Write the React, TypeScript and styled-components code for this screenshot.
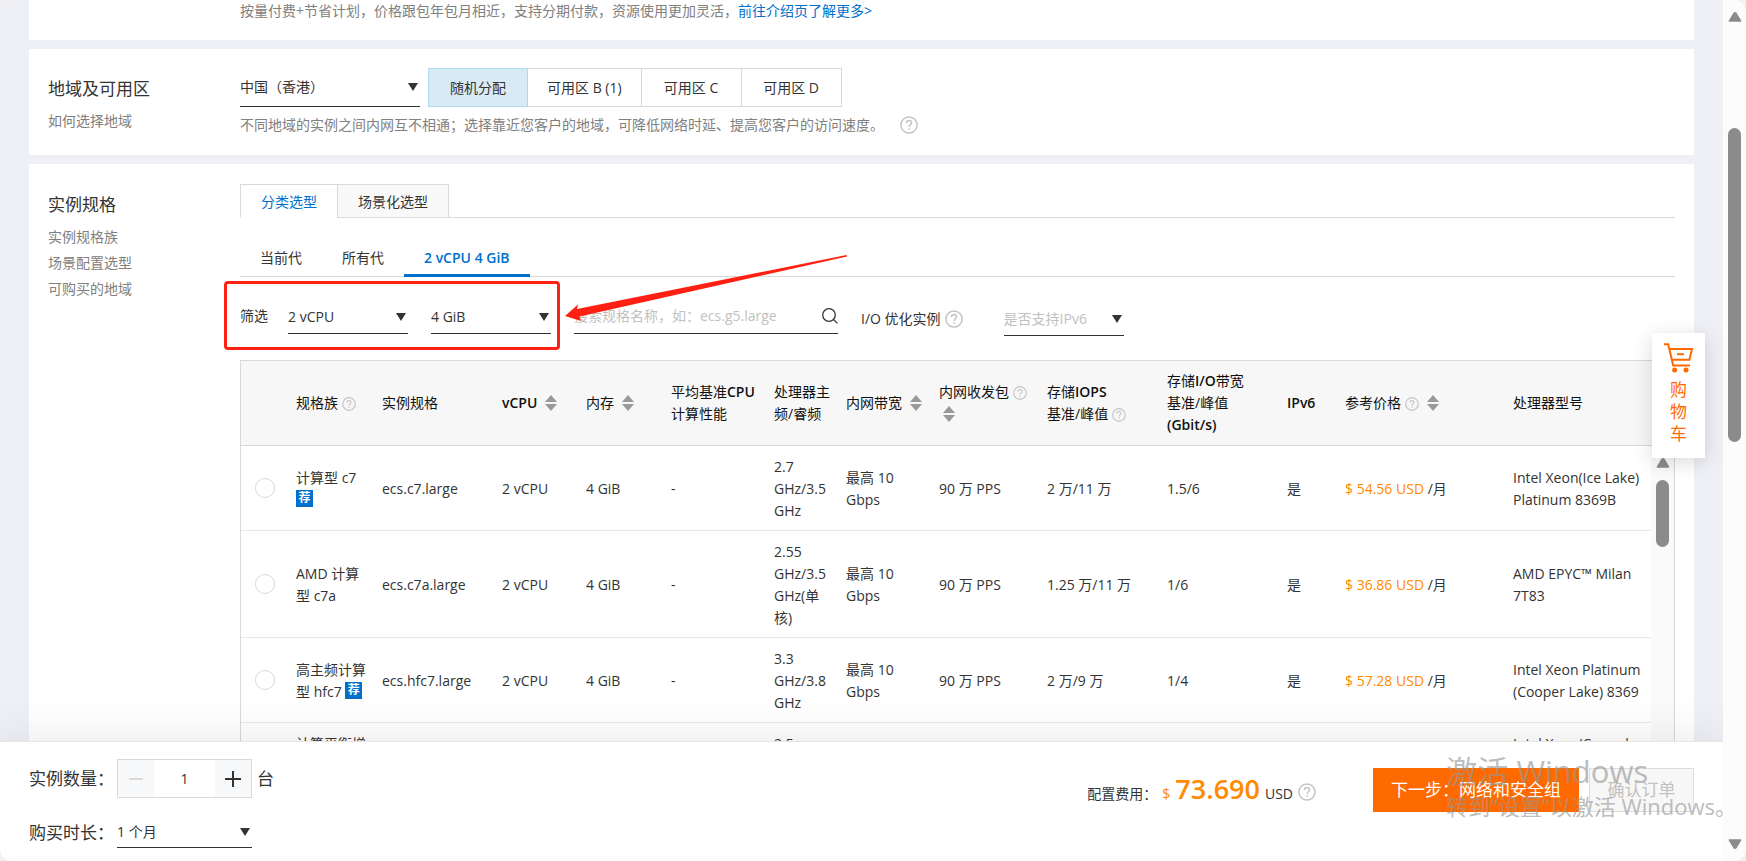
import React from "react";
import styled, { createGlobalStyle, css } from "styled-components";

const GlobalStyle = createGlobalStyle`
  *, *::before, *::after { box-sizing: border-box; }
  body {
    margin: 0;
    background: #f1f1f1;
    color: #333;
    font: 14px/22px "Open Sans", "Noto Sans CJK SC", sans-serif;
  }
  button, input, select { font: inherit; color: inherit; }
  a { text-decoration: none; }
`;

const blue = "#0070cc";
const orange = "#ff6a00";
const line = "#d9d9d9";

/* ---------- page frame ---------- */

const Window = styled.div`
  position: relative;
  display: flex;
  height: 100vh;
  overflow: hidden;
  border-radius: 12px;
  background: #eff0f5;
`;

const Page = styled.div`
  flex: 1;
  min-width: 0;
  display: flex;
  flex-direction: column;
`;

const Content = styled.main`
  flex: 1;
  min-height: 0;
  overflow: hidden;
  display: flex;
  flex-direction: column;
  gap: 9px;
  padding: 0 29px;
`;

const Card = styled.section<{ $top?: number; $bottom?: number }>`
  flex: none;
  display: grid;
  grid-template-columns: 192px minmax(0, 1fr);
  padding: ${(p) => p.$top ?? 20}px 19px ${(p) => p.$bottom ?? 19}px;
  background: #fff;
`;

const Side = styled.div`
  display: flex;
  flex-direction: column;
  padding-top: 10px;
`;

const SideTitle = styled.h2`
  margin: 0 0 8px;
  font-size: 17px;
  font-weight: 400;
  line-height: 22px;
`;

const SideLink = styled.a`
  color: #808080;
  line-height: 26px;
`;

const Hint = styled.p`
  display: flex;
  align-items: center;
  margin: 0;
  color: #808080;
`;

const BlueLink = styled.a`
  color: ${blue};
`;

/* ---------- scrollbars ---------- */

const PageScroll = styled.div`
  position: relative;
  z-index: 2;
  flex: none;
  width: 23px;
  display: flex;
  flex-direction: column;
  align-items: center;
  padding: 12px 0;
  background: #fcfcfc;
`;

const Gap = styled.div<{ $grow: number }>`
  flex: ${(p) => p.$grow} 0 0;
`;

const Thumb = styled.div<{ $grow?: number }>`
  ${(p) => (p.$grow ? css`flex: ${p.$grow} 0 0;` : css`height: 67px;`)}
  width: 13px;
  border-radius: 7px;
  background: #8b8b8b;
`;

const TableScroll = styled.div`
  display: flex;
  flex-direction: column;
  align-items: center;
  gap: 12px;
  padding-top: 12px;
`;

function ScrollArrow({ down }: { down?: boolean }) {
  return (
    <svg width="14" height="10" viewBox="0 0 14 10" aria-hidden="true">
      <path
        d={down ? "M1.5 1h11L8 8.6Q7 9.6 6 8.6Z" : "M1.5 9h11L8 1.4Q7 .4 6 1.4Z"}
        fill="#8b8b8b"
        stroke="#8b8b8b"
        strokeWidth="1.6"
        strokeLinejoin="round"
      />
    </svg>
  );
}

/* ---------- icons ---------- */

function HelpIcon({ size = 18 }: { size?: number }) {
  return (
    <svg width={size} height={size} viewBox="0 0 18 18" fill="none" stroke="#c4c4c4" strokeWidth="1.5" aria-hidden="true">
      <circle cx="9" cy="9" r="8.1" />
      <path d="M6.5 7.1C6.5 5.5 7.5 4.6 9 4.6s2.5.9 2.5 2.3c0 1.9-2.4 1.9-2.4 4" />
      <path d="M9.1 12.2v1.6" />
    </svg>
  );
}

function SortIcon() {
  return (
    <svg width="12" height="16" viewBox="0 0 12 16" fill="#999" aria-hidden="true">
      <path d="M6 0l6 7H0zM6 16l6-7H0z" />
    </svg>
  );
}

function SearchIcon() {
  return (
    <svg width="16" height="16" viewBox="0 0 16 16" fill="none" stroke="#333" strokeWidth="1.3" aria-hidden="true">
      <circle cx="7" cy="7" r="6.3" />
      <path d="M11.4 11.4l4 4" />
    </svg>
  );
}

function CartIcon() {
  return (
    <svg width="30" height="30" viewBox="0 0 30 30" fill="none" stroke={orange} strokeWidth="2" aria-hidden="true">
      <path d="M0 1.2h4.2l5 21.2H26" />
      <path d="M5 6h23l-2.6 10.8H8" />
      <path d="M13 11.2h7" />
      <circle cx="10.6" cy="27" r="2.5" fill={orange} stroke="none" />
      <circle cx="22" cy="27" r="2.5" fill={orange} stroke="none" />
    </svg>
  );
}

/* ---------- form parts ---------- */

const SelectBox = styled.div<{ $width: number; $height: number }>`
  display: grid;
  align-items: center;
  width: ${(p) => p.$width}px;
  height: ${(p) => p.$height}px;
  border-bottom: 1px solid #333;
  > * { grid-area: 1 / 1; }
  > svg { justify-self: end; margin-right: 2px; pointer-events: none; }
`;

const NativeSelect = styled.select<{ $muted?: boolean }>`
  width: 100%;
  height: 100%;
  padding: 0;
  border: 0;
  outline: 0;
  appearance: none;
  background: none;
  color: ${(p) => (p.$muted ? "#c1c1c1" : "#333")};
`;

function Select(props: { label: string; value: string; width: number; height: number; muted?: boolean }) {
  return (
    <SelectBox $width={props.width} $height={props.height}>
      <NativeSelect aria-label={props.label} $muted={props.muted}>
        <option>{props.value}</option>
      </NativeSelect>
      <svg width="10" height="8" viewBox="0 0 10 8" aria-hidden="true">
        <path d="M0 0h10L5 8z" fill="#333" />
      </svg>
    </SelectBox>
  );
}

const RegionRow = styled.div`
  display: flex;
  gap: 8px;
  margin-bottom: 7px;
`;

const ZoneGroup = styled.div`
  display: flex;
`;

const ZoneButton = styled.button<{ $active?: boolean }>`
  height: 39px;
  min-width: 100px;
  padding: 0 19px;
  border: 1px solid ${(p) => (p.$active ? "#b3d7ef" : line)};
  background: ${(p) => (p.$active ? "#d9eaf7" : "#fff")};
  & + & { border-left: 0; }
`;

const HintGap = styled.span`
  display: flex;
  margin-left: 16px;
`;

/* ---------- tabs ---------- */

const Tabs = styled.div`
  display: flex;
  height: 34px;
  border-bottom: 1px solid ${line};
`;

const Tab = styled.button<{ $active?: boolean }>`
  height: 34px;
  padding: 2px 20px 0;
  border: 1px solid ${line};
  border-bottom-color: ${(p) => (p.$active ? "#fff" : line)};
  background: ${(p) => (p.$active ? "#fff" : "#f9f9f9")};
  color: ${(p) => (p.$active ? blue : "#333")};
  & + & { margin-left: -1px; }
`;

const SubTabs = styled.div`
  display: flex;
  height: 37px;
  margin-top: 22px;
  border-bottom: 1px solid ${line};
`;

const SubTab = styled.button<{ $active?: boolean }>`
  height: 37px;
  padding: 1px 20px 0;
  border: 0;
  border-bottom: 3px solid ${(p) => (p.$active ? blue : "transparent")};
  background: none;
  color: ${(p) => (p.$active ? blue : "#333")};
  font-weight: ${(p) => (p.$active ? 600 : 400)};
`;

/* ---------- filters ---------- */

const Filters = styled.div`
  position: relative;
  display: flex;
  align-items: flex-start;
  gap: 23px;
  margin: 23px 0 24px;
`;

const FilterLabel = styled.span`
  width: 25px;
  line-height: 32px;
  white-space: nowrap;
`;

const SearchBox = styled.div`
  display: flex;
  align-items: center;
  width: 264px;
  height: 34px;
  padding-bottom: 2px;
  border-bottom: 1px solid #333;
`;

const SearchInput = styled.input`
  flex: 1;
  min-width: 0;
  padding: 0;
  border: 0;
  outline: 0;
  background: none;
  &::placeholder { color: #c1c1c1; opacity: 1; }
`;

const Extras = styled.div`
  display: flex;
  align-items: center;
  gap: 41px;
  padding-top: 2px;
`;

const IoLabel = styled.span`
  display: flex;
  align-items: center;
  gap: 4px;
`;

const MarkBox = styled.div`
  position: absolute;
  left: -16px;
  top: -19px;
  width: 336px;
  height: 69px;
  border: 3px solid #ff2013;
  border-radius: 4px;
  pointer-events: none;
`;

const MarkArrow = styled.svg`
  position: absolute;
  left: 324px;
  top: -46px;
  pointer-events: none;
`;

/* ---------- table ---------- */

const SpecTable = styled.table`
  width: 100%;
  border: 1px solid ${line};
  border-collapse: separate;
  border-spacing: 0;
  table-layout: fixed;
`;

const Th = styled.th`
  height: 85px;
  padding: 9px 0 9px 10px;
  border-bottom: 1px solid ${line};
  background: #f7f7f7;
  color: #111;
  font-weight: 400;
  text-align: left;
  white-space: pre-line;
  svg { vertical-align: -3px; margin-left: 4px; }
`;

const Latin = styled.span`
  font-weight: 600;
`;

const SortButton = styled.button<{ $wrapped?: boolean }>`
  padding: 0;
  border: 0;
  margin-left: ${(p) => (p.$wrapped ? 0 : 4)}px;
  background: none;
  line-height: 16px;
`;

const Td = styled.td`
  padding: 10px 0 8px 10px;
  border-bottom: 1px solid #e8e8e8;
  white-space: pre-line;
`;

const ScrollTd = styled.td`
  padding: 0;
  vertical-align: top;
  background: #fafafa;
`;

const Radio = styled.input`
  display: block;
  width: 20px;
  height: 20px;
  margin: 0 0 2px 4px;
  border: 1px solid #d9d9d9;
  border-radius: 50%;
  appearance: none;
  background: #fff;
`;

const Badge = styled.span`
  display: inline-block;
  width: 17px;
  height: 17px;
  background: ${blue};
  color: #fff;
  font-size: 12px;
  font-weight: 700;
  line-height: 16px;
  text-align: center;
  vertical-align: 3px;
`;

const Price = styled.span`
  color: #ff8a00;
`;

type Row = {
  family: string;
  recommended?: boolean;
  spec: string;
  freq: string;
  iops: string;
  io: string;
  price: string;
  cpu: string;
};

const rows: Row[] = [
  { family: "计算型 c7\n", recommended: true, spec: "ecs.c7.large", freq: "2.7\nGHz/3.5\nGHz", iops: "2 万/11 万", io: "1.5/6", price: "54.56", cpu: "Intel Xeon(Ice Lake)\nPlatinum 8369B" },
  { family: "AMD 计算\n型 c7a", spec: "ecs.c7a.large", freq: "2.55\nGHz/3.5\nGHz(单\n核)", iops: "1.25 万/11 万", io: "1/6", price: "36.86", cpu: "AMD EPYC™ Milan\n7T83" },
  { family: "高主频计算\n型 hfc7 ", recommended: true, spec: "ecs.hfc7.large", freq: "3.3\nGHz/3.8\nGHz", iops: "2 万/9 万", io: "1/4", price: "57.28", cpu: "Intel Xeon Platinum\n(Cooper Lake) 8369" },
  { family: "计算平衡增\n强型 c6e\n", recommended: true, spec: "ecs.c6e.large", freq: "2.5\nGHz/3.2\nGHz", iops: "2 万/6 万", io: "1/4", price: "51.22", cpu: "Intel Xeon(Cascade\nLake) Platinum\n8269CY" },
];

const columns = [45, 86, 120, 84, 85, 103, 72, 93, 108, 120, 120, 58, 168];

function Sort({ label, wrapped }: { label: string; wrapped?: boolean }) {
  return (
    <SortButton aria-label={label} $wrapped={wrapped}>
      <SortIcon />
    </SortButton>
  );
}

function InstanceTable() {
  return (
    <SpecTable>
      <colgroup>
        {columns.map((w, i) => (
          <col key={i} width={w} />
        ))}
        <col />
        <col width={23} />
      </colgroup>
      <thead>
        <tr>
          <Th />
          <Th>规格族<HelpIcon size={14} /></Th>
          <Th>实例规格</Th>
          <Th><Latin>vCPU</Latin><Sort label="按 vCPU 排序" /></Th>
          <Th>内存<Sort label="按内存排序" /></Th>
          <Th>平均基准<Latin>CPU</Latin>{"\n"}计算性能</Th>
          <Th>处理器主{"\n"}频/睿频</Th>
          <Th>内网带宽<Sort label="按内网带宽排序" /></Th>
          <Th>内网收发包<HelpIcon size={14} />{"\n"}<Sort label="按内网收发包排序" wrapped /></Th>
          <Th>存储<Latin>IOPS</Latin>{"\n"}基准/峰值<HelpIcon size={14} /></Th>
          <Th>存储<Latin>I/O</Latin>带宽{"\n"}基准/峰值{"\n"}<Latin>(Gbit/s)</Latin></Th>
          <Th><Latin>IPv6</Latin></Th>
          <Th>参考价格<HelpIcon size={14} /><Sort label="按参考价格排序" /></Th>
          <Th>处理器型号</Th>
          <Th aria-hidden="true" />
        </tr>
      </thead>
      <tbody>
        {rows.map((r, i) => (
          <tr key={r.spec}>
            <Td><Radio type="radio" name="spec" aria-label={r.spec} /></Td>
            <Td>{r.family}{r.recommended && <Badge>荐</Badge>}</Td>
            <Td>{r.spec}</Td>
            <Td>2 vCPU</Td>
            <Td>4 GiB</Td>
            <Td>-</Td>
            <Td>{r.freq}</Td>
            <Td>{"最高 10\nGbps"}</Td>
            <Td>90 万 PPS</Td>
            <Td>{r.iops}</Td>
            <Td>{r.io}</Td>
            <Td>是</Td>
            <Td><Price>$ {r.price} USD</Price> /月</Td>
            <Td>{r.cpu}</Td>
            {i === 0 && (
              <ScrollTd rowSpan={rows.length} aria-hidden="true">
                <TableScroll>
                  <ScrollArrow />
                  <Thumb />
                </TableScroll>
              </ScrollTd>
            )}
          </tr>
        ))}
      </tbody>
    </SpecTable>
  );
}

/* ---------- order bar ---------- */

const OrderBar = styled.footer`
  position: relative;
  flex: none;
  display: flex;
  justify-content: space-between;
  padding: 17px 29px 13px;
  border-top: 1px solid #e6e6e6;
  background: #fff;
  box-shadow: 0 0 50px rgba(0, 0, 0, 0.1);
`;

const OrderFields = styled.div`
  display: grid;
  grid-template-columns: 88px auto;
  align-items: center;
  row-gap: 19px;
`;

const OrderLabel = styled.span`
  font-size: 17px;
  white-space: nowrap;
`;

const Quantity = styled.div`
  display: flex;
  align-items: center;
  gap: 5px;
  font-size: 17px;
`;

const Stepper = styled.div`
  display: grid;
  grid-template-columns: 36px 61px 36px;
  width: 135px;
  height: 39px;
  border: 1px solid ${line};
`;

const StepButton = styled.button`
  display: flex;
  align-items: center;
  justify-content: center;
  padding: 0;
  border: 0;
  background: #f7f8fa;
`;

const StepInput = styled.input`
  min-width: 0;
  padding: 0;
  border: 0;
  font-size: 14px;
  text-align: center;
`;

const OrderActions = styled.div`
  display: flex;
  align-items: center;
  height: 44px;
  margin-top: 9px;
`;

const Cost = styled.div`
  display: flex;
  align-items: baseline;
  gap: 5px;
  margin-right: 57px;
  padding-top: 3px;
  line-height: 44px;
  svg { align-self: center; }
`;

const CostValue = styled.strong`
  color: #ff8a00;
  font-size: 27px;
  font-weight: 600;
`;

const ActionButton = styled.button<{ $primary?: boolean }>`
  height: 44px;
  width: ${(p) => (p.$primary ? 206 : 105)}px;
  padding: 0;
  border: 1px solid ${(p) => (p.$primary ? orange : "#ddd")};
  background: ${(p) => (p.$primary ? orange : "#f7f7f7")};
  color: ${(p) => (p.$primary ? "#fff" : "#c1c1c1")};
  font-size: 17px;
  & + & { margin-left: 10px; }
`;

/* ---------- floating parts ---------- */

const Cart = styled.button`
  position: absolute;
  z-index: 3;
  top: 333px;
  right: 41px;
  width: 53px;
  height: 125px;
  display: flex;
  flex-direction: column;
  align-items: center;
  gap: 6px;
  padding: 10px 17px 0;
  border: 0;
  background: #fff;
  box-shadow: 0 4px 20px rgba(0, 0, 0, 0.15);
  color: ${orange};
  font-size: 17px;
  line-height: 22px;
  svg { flex: none; }
`;

const Watermark = styled.div`
  position: absolute;
  z-index: 4;
  right: 9px;
  bottom: 40px;
  color: rgba(150, 150, 150, 0.65);
  font-size: 22px;
  line-height: 30px;
  white-space: nowrap;
  pointer-events: none;
`;

const WatermarkTitle = styled.div`
  font-size: 31px;
  line-height: 40px;
`;

export default function App() {
  return (
    <>
      <GlobalStyle />
      <Window>
        <Page>
          <Content>
            <Card $top={0} $bottom={18}>
              <Side />
              <Hint>
                按量付费+节省计划，价格跟包年包月相近，支持分期付款，资源使用更加灵活，
                <BlueLink href="#plan">前往介绍页了解更多&gt;</BlueLink>
              </Hint>
            </Card>

            <Card $top={19}>
              <Side>
                <SideTitle>地域及可用区</SideTitle>
                <SideLink href="#region">如何选择地域</SideLink>
              </Side>
              <div>
                <RegionRow>
                  <Select label="地域" value="中国（香港）" width={180} height={39} />
                  <ZoneGroup>
                    <ZoneButton $active>随机分配</ZoneButton>
                    <ZoneButton>可用区 B (1)</ZoneButton>
                    <ZoneButton>可用区 C</ZoneButton>
                    <ZoneButton>可用区 D</ZoneButton>
                  </ZoneGroup>
                </RegionRow>
                <Hint>
                  不同地域的实例之间内网互不相通；选择靠近您客户的地域，可降低网络时延、提高您客户的访问速度。
                  <HintGap><HelpIcon /></HintGap>
                </Hint>
              </div>
            </Card>

            <Card>
              <Side>
                <SideTitle>实例规格</SideTitle>
                <SideLink href="#family">实例规格族</SideLink>
                <SideLink href="#scene">场景配置选型</SideLink>
                <SideLink href="#available">可购买的地域</SideLink>
              </Side>
              <div>
                <Tabs>
                  <Tab $active>分类选型</Tab>
                  <Tab>场景化选型</Tab>
                </Tabs>
                <SubTabs>
                  <SubTab>当前代</SubTab>
                  <SubTab>所有代</SubTab>
                  <SubTab $active>2 vCPU 4 GiB</SubTab>
                </SubTabs>
                <Filters>
                  <FilterLabel>筛选</FilterLabel>
                  <Select label="vCPU" value="2 vCPU" width={120} height={34} />
                  <Select label="内存" value="4 GiB" width={120} height={34} />
                  <SearchBox>
                    <SearchInput aria-label="搜索规格" placeholder="搜索规格名称，如：ecs.g5.large" />
                    <SearchIcon />
                  </SearchBox>
                  <Extras>
                    <IoLabel>I/O 优化实例<HelpIcon /></IoLabel>
                    <Select label="IPv6" value="是否支持IPv6" width={120} height={34} muted />
                  </Extras>
                  <MarkBox />
                  <MarkArrow width="284" height="68" viewBox="0 0 284 68" aria-hidden="true">
                    <path d="M1 62L14 50.5L13 55L282.5 1L283 2.5L15.5 62.5L17 67Z" fill="#ff2013" />
                  </MarkArrow>
                </Filters>
                <InstanceTable />
              </div>
            </Card>
          </Content>

          <OrderBar>
            <OrderFields>
              <OrderLabel>实例数量：</OrderLabel>
              <Quantity>
                <Stepper>
                  <StepButton aria-label="减少" disabled>
                    <svg width="14" height="14" viewBox="0 0 14 14" stroke="#d9d9d9" strokeWidth="2"><path d="M0 7h14" /></svg>
                  </StepButton>
                  <StepInput aria-label="实例数量" defaultValue="1" />
                  <StepButton aria-label="增加">
                    <svg width="16" height="16" viewBox="0 0 16 16" stroke="#333" strokeWidth="2"><path d="M0 8h16M8 0v16" /></svg>
                  </StepButton>
                </Stepper>
                台
              </Quantity>
              <OrderLabel>购买时长：</OrderLabel>
              <Select label="购买时长" value="1 个月" width={135} height={31} />
            </OrderFields>
            <OrderActions>
              <Cost>
                <span>配置费用：</span>
                <Price>$</Price>
                <CostValue>73.690</CostValue>
                <span>USD</span>
                <HelpIcon />
              </Cost>
              <ActionButton $primary>下一步：网络和安全组</ActionButton>
              <ActionButton disabled>确认订单</ActionButton>
            </OrderActions>
          </OrderBar>
        </Page>

        <PageScroll aria-hidden="true">
          <ScrollArrow />
          <Gap $grow={106} />
          <Thumb $grow={314} />
          <Gap $grow={397} />
          <ScrollArrow down />
        </PageScroll>

        <Cart>
          <CartIcon />
          <span>购物车</span>
        </Cart>

        <Watermark>
          <WatermarkTitle>激活 Windows</WatermarkTitle>
          转到“设置”以激活 Windows。
        </Watermark>
      </Window>
    </>
  );
}
